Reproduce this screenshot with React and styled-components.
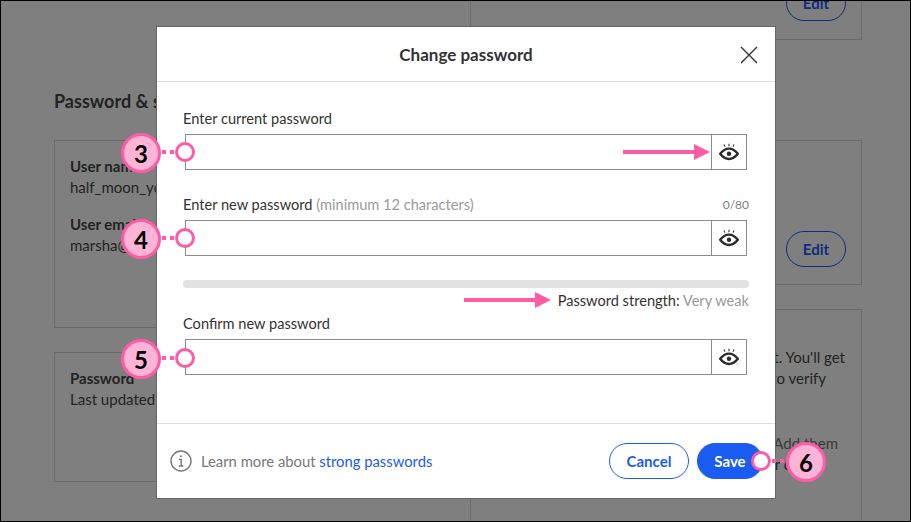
import React from "react";
import styled, { createGlobalStyle } from "styled-components";

const Global = createGlobalStyle`
  html, body { margin: 0; padding: 0; }
  body { font-family: Lato, "Noto Sans", sans-serif; }
  * { box-sizing: border-box; }
`;

const PINK = "#ff5ca6";
const BLUE = "#1a5cf2";

const Frame = styled.div`
  position: relative;
  width: 911px;
  height: 522px;
  border: 1px solid #000;
  background: #7f7f7f;
  overflow: hidden;
  display: grid;
  grid-template-columns: 469px 392px;
  color: #232323;
  font-size: 15px;
`;

const LeftCol = styled.div`
  padding: 90px 0 0 53px;
  width: 445px;
`;

const RightCol = styled.div`
  display: flex;
  flex-direction: column;
  align-items: stretch;
`;

const Heading = styled.h2`
  margin: 0 0 29px;
  font-size: 18px;
  line-height: 20px;
  font-weight: 700;
  color: #232323;
`;

const Card = styled.div`
  border: 1px solid #6b6b6b;
  height: ${(p) => p.$h}px;
  margin-top: ${(p) => p.$top || 0}px;
  padding: ${(p) => p.$pad || "16px"};
  flex: none;
`;

const EditCard = styled(Card)`
  display: flex;
  flex-direction: column;
  justify-content: flex-end;
  align-items: flex-end;
  padding: 0 15px ${(p) => p.$bottom}px 0;
  ${(p) => p.$noTop && "border-top: none;"}
`;

const EditButton = styled.div`
  flex: none;
  width: 60px;
  height: 36px;
  border-radius: 18px;
  border: 1px solid #0e2d7a;
  color: #0e2d7a;
  font-weight: 700;
  font-size: 15px;
  display: flex;
  align-items: center;
  justify-content: center;
`;

const InfoLabel = styled.div`
  font-weight: 700;
  line-height: 21px;
  margin-top: ${(p) => p.$top || 0}px;
`;

const InfoValue = styled.div`
  line-height: 21px;
  white-space: nowrap;
`;

const EndLine = styled.div`
  text-align: right;
  line-height: 21px;
  padding-right: ${(p) => p.$end}px;
  margin-top: ${(p) => p.$top || 0}px;
  white-space: nowrap;
  color: ${(p) => p.$color || "#232323"};
`;

const Dialog = styled.div`
  position: absolute;
  left: 155px;
  top: 25px;
  width: 620px;
  height: 473px;
  background: #fff;
  border: 1px solid #666;
  display: flex;
  flex-direction: column;
  color: #333;
`;

const DialogHeader = styled.div`
  height: 55px;
  flex: none;
  display: flex;
  align-items: center;
  justify-content: center;
  position: relative;
  border-bottom: 1px solid #dedede;
  font-size: 17px;
  font-weight: 700;
  color: #333;
`;

const CloseButton = styled.svg`
  position: absolute;
  right: 17px;
  top: 19px;
  width: 18px;
  height: 18px;
`;

const DialogBody = styled.div`
  flex: 1;
  padding: 26px 26px 0;
`;

const LabelRow = styled.div`
  display: flex;
  justify-content: space-between;
  align-items: center;
  height: 20px;
  font-size: 14.6px;
  margin-top: ${(p) => p.$top || 0}px;
`;

const Hint = styled.span`
  color: #9a9a9a;
`;

const Counter = styled.span`
  font-size: 12px;
  color: #7d7d7d;
`;

const InputBox = styled.div`
  margin: 6px 2px 0;
  width: 562px;
  height: 36px;
  border: 1px solid #8c8c8c;
  display: flex;
  justify-content: flex-end;
`;

const EyeCell = styled.div`
  width: 35px;
  border-left: 1px solid #8c8c8c;
  display: flex;
  align-items: center;
  justify-content: center;
`;

const StrengthBar = styled.div`
  height: 8px;
  margin-top: 24px;
  border-radius: 4px;
  background: #e2e2e2;
`;

const StrengthRow = styled.div`
  text-align: right;
  margin-top: 3px;
  line-height: 20px;
  font-size: 14.6px;
`;

const DialogFooter = styled.div`
  height: 75px;
  flex: none;
  border-top: 1px solid #dedede;
  display: flex;
  align-items: center;
  justify-content: space-between;
  padding: 0 12px 0 13px;
`;

const LearnMore = styled.div`
  display: flex;
  align-items: center;
  gap: 9px;
  font-size: 14.8px;
  color: #777;
`;

const Link = styled.span`
  color: ${BLUE};
`;

const Buttons = styled.div`
  display: flex;
  gap: 8px;
`;

const Button = styled.div`
  height: 36px;
  width: ${(p) => p.$w}px;
  border-radius: 18px;
  border: 1px solid ${BLUE};
  background: ${(p) => (p.$primary ? BLUE : "#fff")};
  color: ${(p) => (p.$primary ? "#fff" : BLUE)};
  font-weight: 700;
  font-size: 15px;
  display: flex;
  align-items: center;
  justify-content: center;
`;

const Badge = styled.div`
  position: absolute;
  width: 40px;
  height: 40px;
  margin: -19px 0 0 -20px;
  border-radius: 50%;
  border: 3px solid ${PINK};
  background: #ffb3d6;
  color: #000;
  font-size: 24px;
  font-weight: 700;
  display: flex;
  align-items: center;
  justify-content: center;
`;

const Ring = styled.div`
  position: absolute;
  width: 20px;
  height: 20px;
  margin: -10px 0 0 -10px;
  border-radius: 50%;
  border: 3px solid ${PINK};
  background: #fff;
`;

const Dots = styled.div`
  position: absolute;
  width: 13px;
  height: 4px;
  margin-top: -2px;
  background: repeating-linear-gradient(90deg, ${PINK} 0 4px, transparent 4px 8px);
`;

const Arrow = styled.svg`
  position: absolute;
  width: 88px;
  height: 18px;
  margin-top: -9px;
`;

const Eye = () => (
  <svg width="20" height="18" viewBox="0 0 20 18" fill="none">
    <path d="M1.200 10.800C3.800 7.300 6.800 5.600 10 5.600s6.200 1.700 8.800 5.200c-2.600 3.500-5.600 5.200-8.800 5.200s-6.200-1.700-8.800-5.200z" stroke="#2b2b2b" strokeWidth="2.400" strokeLinejoin="miter" />
    <circle cx="10" cy="10.800" r="2.200" fill="#2b2b2b" />
    <path d="M10 .8v2.400M5 1.500l.9 2.100M15 1.500l-.9 2.100" stroke="#2b2b2b" strokeWidth="1.100" />
  </svg>
);

const InfoIcon = () => (
  <svg width="22" height="22" viewBox="0 0 22 22" fill="none" stroke="#777">
    <circle cx="11" cy="11" r="10" strokeWidth="1.400" />
    <path d="M9 9.500h2.200V16M8.800 16h4.600" strokeWidth="1.400" />
    <circle cx="11" cy="6.300" r="1" fill="#777" stroke="none" />
  </svg>
);

const PasswordField = ({ children, top, counter }) => (
  <>
    <LabelRow $top={top}>
      <span>{children}</span>
      {counter && <Counter>{counter}</Counter>}
    </LabelRow>
    <InputBox>
      <EyeCell>
        <Eye />
      </EyeCell>
    </InputBox>
  </>
);

// offsets are relative to the frame, which has a 1px border
const callouts = [
  { n: 3, y: 151, badge: 140, dots: 161, ring: 184 },
  { n: 4, y: 237, badge: 140, dots: 161, ring: 184 },
  { n: 5, y: 357, badge: 140, dots: 161, ring: 184 },
  { n: 6, y: 460, badge: 805, dots: 771, ring: 760 },
];

const Callout = ({ n, y, badge, dots, ring }) => (
  <>
    <Dots style={{ left: dots, top: y }} />
    <Ring style={{ left: ring, top: y }} />
    <Badge style={{ left: badge, top: y }}>{n}</Badge>
  </>
);

const PinkArrow = ({ x, y }) => (
  <Arrow style={{ left: x, top: y }} viewBox="0 0 88 18">
    <path d="M0 7h71V1l16 8-16 8v-6H0z" fill={PINK} />
  </Arrow>
);

export default function App() {
  return (
    <Frame>
      <Global />
      <LeftCol>
        <Heading>Password &amp; security</Heading>
        <Card $h={188} $pad="15px 15px">
          <InfoLabel>User name</InfoLabel>
          <InfoValue>half_moon_yoga</InfoValue>
          <InfoLabel $top={16}>User email</InfoLabel>
          <InfoValue>marsha@example.com</InfoValue>
        </Card>
        <Card $h={130} $top={24} $pad="15px 15px">
          <InfoLabel>Password</InfoLabel>
          <InfoValue>Last updated</InfoValue>
        </Card>
      </LeftCol>
      <RightCol>
        <EditCard $h={39} $noTop $bottom={18}>
          <EditButton>Edit</EditButton>
        </EditCard>
        <EditCard $h={145} $top={100} $bottom={17}>
          <EditButton>Edit</EditButton>
        </EditCard>
        <Card $h={240} $top={24} $pad="37px 0 0">
          <EndLine $end={16}>your account. You'll get</EndLine>
          <EndLine $end={35}>a code to verify</EndLine>
          <EndLine $end={23} $top={44} $color="#3a3a3a">Add them</EndLine>
          <EndLine $end={70}>or c</EndLine>
        </Card>
      </RightCol>

      <Dialog>
        <DialogHeader>
          Change password
          <CloseButton viewBox="0 0 18 18">
            <path d="M1 1l16 16M17 1L1 17" stroke="#333" strokeWidth="1.400" />
          </CloseButton>
        </DialogHeader>
        <DialogBody>
          <PasswordField>Enter current password</PasswordField>
          <PasswordField top={24} counter="0/80">
            Enter new password <Hint>(minimum 12 characters)</Hint>
          </PasswordField>
          <StrengthBar />
          <StrengthRow>
            Password strength: <Hint>Very weak</Hint>
          </StrengthRow>
          <PasswordField top={2}>Confirm new password</PasswordField>
        </DialogBody>
        <DialogFooter>
          <LearnMore>
            <InfoIcon />
            <span>
              Learn more about <Link>strong passwords</Link>
            </span>
          </LearnMore>
          <Buttons>
            <Button $w={80}>Cancel</Button>
            <Button $w={66} $primary>Save</Button>
          </Buttons>
        </DialogFooter>
      </Dialog>

      {callouts.map((c) => (
        <Callout key={c.n} {...c} />
      ))}
      <PinkArrow x={622} y={151} />
      <PinkArrow x={463} y={299} />
    </Frame>
  );
}
